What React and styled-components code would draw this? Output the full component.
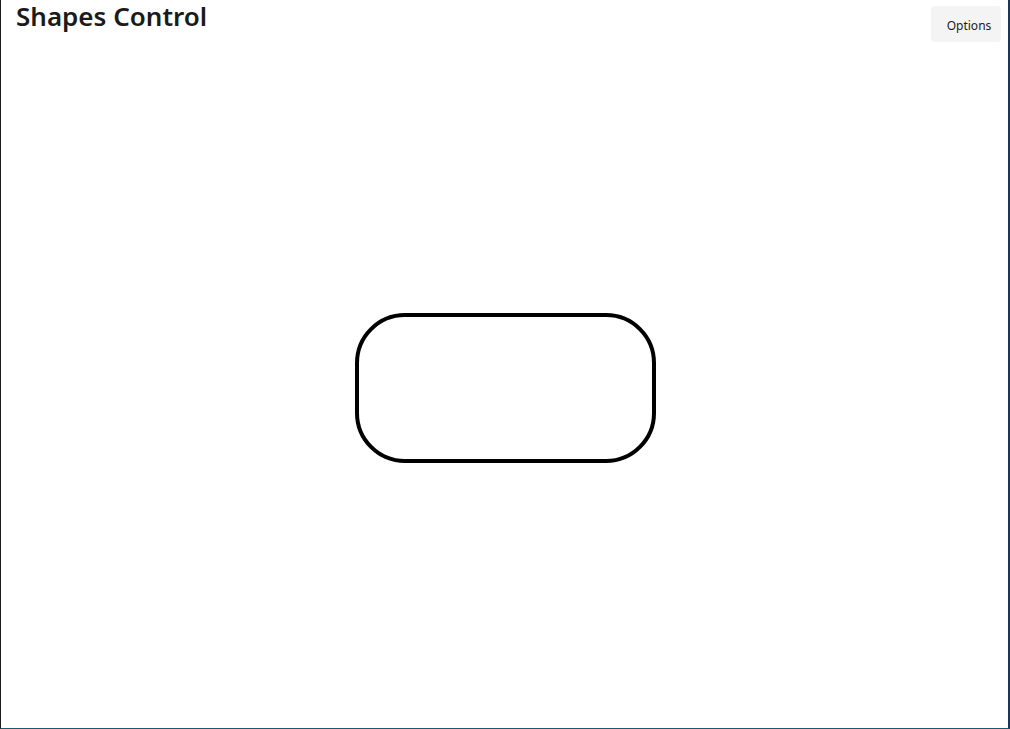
import styled, { createGlobalStyle } from "styled-components";

const Global = createGlobalStyle`
    html, body {
        margin: 0;
        padding: 0;
        background: #ffffff;
    }
    body {
        font-family: "Noto Sans", "Open Sans", sans-serif;
    }
`;

const App = () => {
    return (
        <>
            <Global />
            <Window>
                <Header>
                    <Title>Shapes Control</Title>
                    <OptionsButton>Options</OptionsButton>
                </Header>
                <Canvas>
                    <Shape />
                </Canvas>
            </Window>
        </>
    );
}

export default App;

//Ventana principal
const Window = styled.div`
    box-sizing: border-box;
    width: 1010px;
    height: 729px;
    display: flex;
    flex-direction: column;
    background: #ffffff;
    border-left: 1px solid #1c1c1c;
    border-right: 2px solid #1d3656;
    border-bottom: 1px solid #1a5a70;
`;

const Header = styled.div`
    display: flex;
    justify-content: space-between;
    align-items: flex-start;
    padding: 0 7px 0 15px;
`;

const Title = styled.h1`
    margin: 0;
    font-family: "Noto Sans", "Open Sans", sans-serif;
    font-weight: 600;
    font-size: 26px;
    line-height: 32px;
    color: #1b1b1b;
`;

const OptionsButton = styled.button`
    margin-top: 6px;
    width: 70px;
    height: 36px;
    border: none;
    border-radius: 4px;
    background: #f4f4f4;
    color: #1b1b1b;
    font-family: "Noto Sans", "Open Sans", sans-serif;
    font-size: 12px;
    padding: 2px 0 0 6px;
`;

//Lienzo con la figura
const Canvas = styled.div`
    flex: 1;
    display: flex;
    align-items: flex-start;
    justify-content: center;
    padding-top: 271px;
    padding-left: 1px;
`;

const Shape = styled.div`
    box-sizing: border-box;
    width: 301px;
    height: 150px;
    border: 4px solid #000000;
    border-radius: 50px;
`;
